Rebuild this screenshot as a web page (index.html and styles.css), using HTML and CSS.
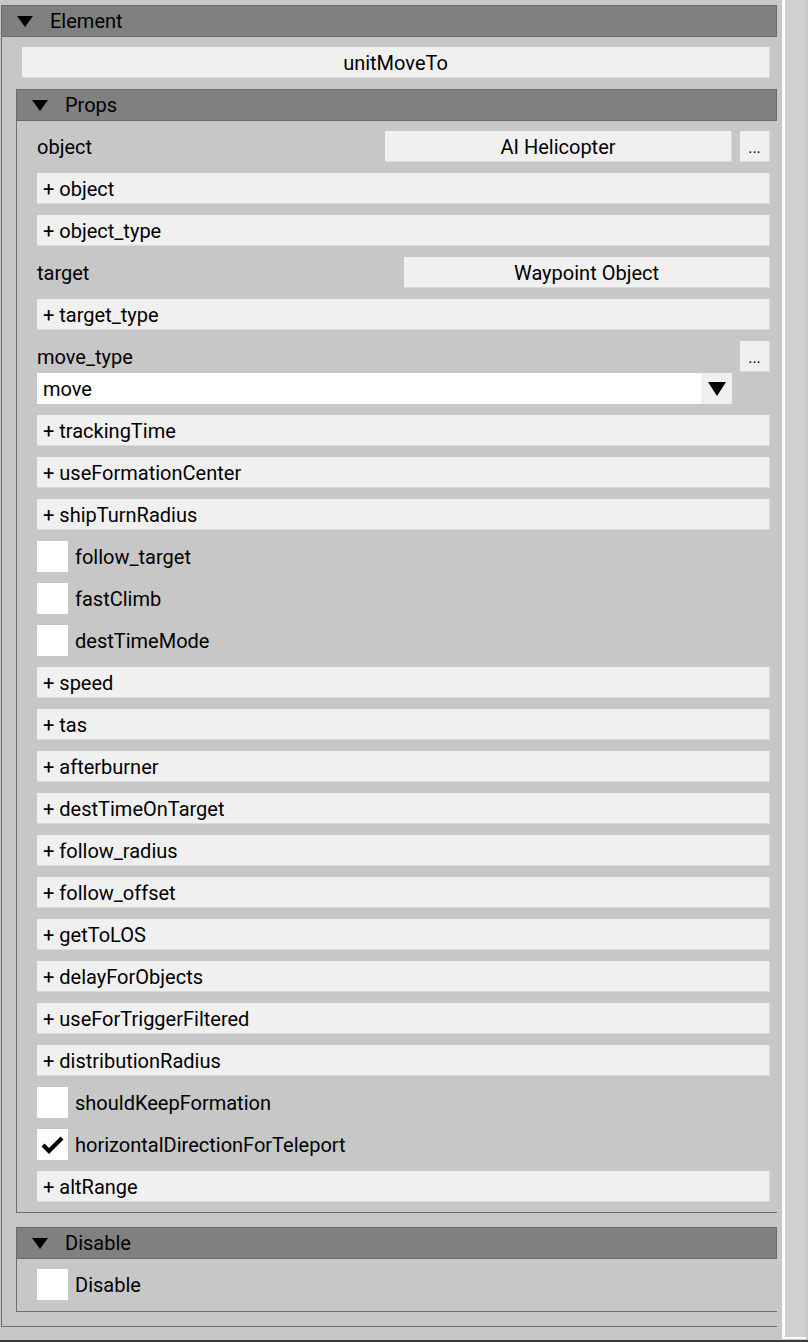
FILE: index.html
```html
<!DOCTYPE html>
<html>
<head>
<meta charset="utf-8">
<link rel="stylesheet" href="styles.css">
</head>
<body>
<div class="app">
  <div class="main">
    <section class="panel outer">
      <div class="hdr"><svg class="tri" width="16" height="11" viewBox="0 0 16 11"><polygon points="0,0 16,0 8,11" fill="#000"/></svg><span>Element</span></div>
      <div class="body outer-body">
        <div class="input">unitMoveTo</div>
        <section class="panel props">
          <div class="hdr"><svg class="tri" width="16" height="11" viewBox="0 0 16 11"><polygon points="0,0 16,0 8,11" fill="#000"/></svg><span>Props</span></div>
          <div class="body props-body">
            <div class="field"><span class="lbl">object</span><div class="btn w-obj">AI Helicopter</div><div class="dots">...</div></div>
            <div class="box">+ object</div>
            <div class="box">+ object_type</div>
            <div class="field"><span class="lbl">target</span><div class="btn w-tgt">Waypoint Object</div></div>
            <div class="box">+ target_type</div>
            <div class="group">
              <div class="field"><span class="lbl">move_type</span><div class="dots">...</div></div>
              <div class="select"><span class="sel-val">move</span><span class="sel-arrow"><svg width="18" height="14" viewBox="0 0 18 14"><polygon points="0,0 18,0 9,14" fill="#000"/></svg></span></div>
            </div>
            <div class="box">+ trackingTime</div>
            <div class="box">+ useFormationCenter</div>
            <div class="box">+ shipTurnRadius</div>
            <div class="check"><span class="cb"></span><span class="clbl">follow_target</span></div>
            <div class="check"><span class="cb"></span><span class="clbl">fastClimb</span></div>
            <div class="check"><span class="cb"></span><span class="clbl">destTimeMode</span></div>
            <div class="box">+ speed</div>
            <div class="box">+ tas</div>
            <div class="box">+ afterburner</div>
            <div class="box">+ destTimeOnTarget</div>
            <div class="box">+ follow_radius</div>
            <div class="box">+ follow_offset</div>
            <div class="box">+ getToLOS</div>
            <div class="box">+ delayForObjects</div>
            <div class="box">+ useForTriggerFiltered</div>
            <div class="box">+ distributionRadius</div>
            <div class="check"><span class="cb"></span><span class="clbl">shouldKeepFormation</span></div>
            <div class="check"><span class="cb"><svg width="31" height="31" viewBox="0 0 31 31"><polyline points="6,16 12,22 25,9" fill="none" stroke="#000" stroke-width="4.2"/></svg></span><span class="clbl">horizontalDirectionForTeleport</span></div>
            <div class="box">+ altRange</div>
          </div>
        </section>
        <section class="panel disable">
          <div class="hdr"><svg class="tri" width="16" height="11" viewBox="0 0 16 11"><polygon points="0,0 16,0 8,11" fill="#000"/></svg><span>Disable</span></div>
          <div class="body disable-body">
            <div class="check"><span class="cb"></span><span class="clbl">Disable</span></div>
          </div>
        </section>
      </div>
    </section>
  </div>
  <div class="sbwrap"><div class="sb"></div></div>
</div>
<div class="bottomline"></div>
</body>
</html>
```

FILE: styles.css
```css
* { box-sizing: border-box; }
html, body { margin: 0; padding: 0; }
body {
  background: #c7c7c7;
  font-family: Roboto, "Liberation Sans", sans-serif;
  font-size: 20px;
  color: #000;
  width: 808px;
  height: 1342px;
  overflow: hidden;
}
.app { display: flex; height: 1340px; }
.main { width: 782px; padding-top: 5px; }
.sbwrap { width: 26px; }
.sb {
  width: 24px;
  height: 1339px;
  background: #d0d0d0;
  border-left: 3px solid #fafafa;
  border-bottom: 2px solid #fafafa;
}
.bottomline { height: 2px; background: #3a3a3a; }

.panel { display: flex; flex-direction: column; }
.outer { margin-left: 1px; width: 776px; }
.hdr {
  height: 32px;
  background: #808080;
  border: 1px solid #6a6a6a;
  display: flex;
  align-items: center;
  padding-left: 15px;
}
.hdr .tri { margin-right: 17px; margin-top: 1px; }
.body {
  border-left: 1px solid #6e6e6e;
  border-bottom: 1px solid #6e6e6e;
  display: flex;
  flex-direction: column;
}
.outer-body { padding: 10px 0 14px 0; }
.input {
  margin-left: 20px;
  width: 748px;
  height: 31px;
  background: #f0f0f0;
  border-right: 1px solid #dadada;
  border-bottom: 1px solid #dadada;
  display: flex;
  align-items: center;
  justify-content: center;
  padding-top: 1px;
  margin-bottom: 11px;
}
.props, .disable { margin-left: 14px; width: 761px; }
.props { margin-bottom: 14px; }
.props-body { padding: 10px 7px 10px 20px; gap: 11px; }
.disable-body { padding: 10px 7px 11px 20px; }

.field { display: flex; align-items: center; height: 31px; }
.lbl { flex: 1; }
.btn {
  height: 31px;
  background: #f0f0f0;
  display: flex;
  align-items: center;
  justify-content: center;
  padding-top: 1px;
  border-right: 1px solid #dadada;
  border-bottom: 1px solid #dadada;
}
.w-obj { width: 347px; }
.w-tgt { width: 366px; }
.dots {
  width: 30px;
  height: 31px;
  margin-left: 8px;
  background: #f0f0f0;
  font-size: 16px;
  display: flex;
  align-items: center;
  justify-content: center;
  padding-top: 3px;
  border-right: 1px solid #dadada;
  border-bottom: 1px solid #dadada;
}
.box {
  height: 31px;
  background: #f0f0f0;
  display: flex;
  align-items: center;
  padding-left: 6px;
  padding-top: 2px;
  border-right: 1px solid #dadada;
  border-bottom: 1px solid #dadada;
}
.group { display: flex; flex-direction: column; gap: 1px; }
.select {
  width: 695px;
  height: 31px;
  background: #fff;
  display: flex;
  align-items: center;
}
.sel-val { flex: 1; padding-left: 6px; }
.sel-arrow {
  width: 31px;
  height: 31px;
  background: #f0f0f0;
  display: flex;
  align-items: center;
  justify-content: center;
}
.check { display: flex; align-items: center; height: 31px; }
.cb {
  width: 31px;
  height: 31px;
  background: #fff;
  display: block;
  margin-right: 7px;
}
.cb svg { display: block; }
```
